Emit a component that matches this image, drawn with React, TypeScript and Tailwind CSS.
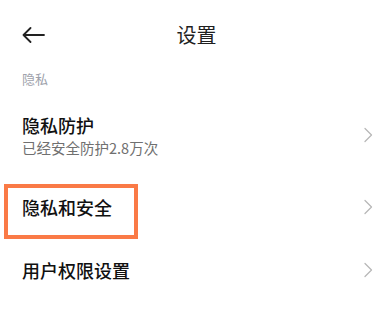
import React from "react";

const font = { fontFamily: '"Noto Sans CJK SC", "Noto Sans", sans-serif' };

function Chevron() {
  return (
    <svg width="10" height="16" viewBox="0 0 10 16" fill="none" className="shrink-0">
      <path d="M2 1.5L8.5 8L2 14.5" stroke="#b8b8b8" strokeWidth="1.3" strokeLinecap="round" strokeLinejoin="round" />
    </svg>
  );
}

export default function App() {
  return (
    <div className="relative h-[310px] w-[381px] overflow-hidden bg-white" style={font}>
      {/* header */}
      <div className="relative flex h-[70px] items-center px-[22px]">
        <svg width="23" height="16" viewBox="0 0 23 16" fill="none">
          <path d="M1.5 8H22M8.5 1L1.5 8L8.5 15" stroke="#222" strokeWidth="1.8" strokeLinecap="round" strokeLinejoin="round" />
        </svg>
        <div className="absolute inset-x-0 top-0 flex h-[70px] items-center justify-center pl-[12px]">
          <span className="text-[20px] leading-none text-[#1f1f1f]">设置</span>
        </div>
      </div>

      <div className="h-[28px] pl-[22px] text-[13px] leading-[18px] text-[#9ea2ab]">隐私</div>

      {/* rows */}
      <div className="flex h-[74px] items-center justify-between pl-[22px] pr-[8px]">
        <div className="flex flex-col">
          <span className="text-[18px] font-medium leading-[22px] text-[#111]">隐私防护</span>
          <span className="mt-[3px] text-[14.5px] leading-[18px] text-[#707070]">已经安全防护2.8万次</span>
        </div>
        <Chevron />
      </div>

      <div className="relative flex h-[70px] items-center justify-between pl-[22px] pr-[8px]">
        <span className="text-[18px] font-medium leading-[22px] text-[#111]">隐私和安全</span>
        <Chevron />
        <div className="absolute left-[4px] top-[12px] h-[55px] w-[134px] border-[4px] border-[#fa7a46]" />
      </div>

      <div className="flex h-[56px] items-center justify-between pl-[22px] pr-[8px]">
        <span className="text-[18px] font-medium leading-[22px] text-[#111]">用户权限设置</span>
        <Chevron />
      </div>
    </div>
  );
}
